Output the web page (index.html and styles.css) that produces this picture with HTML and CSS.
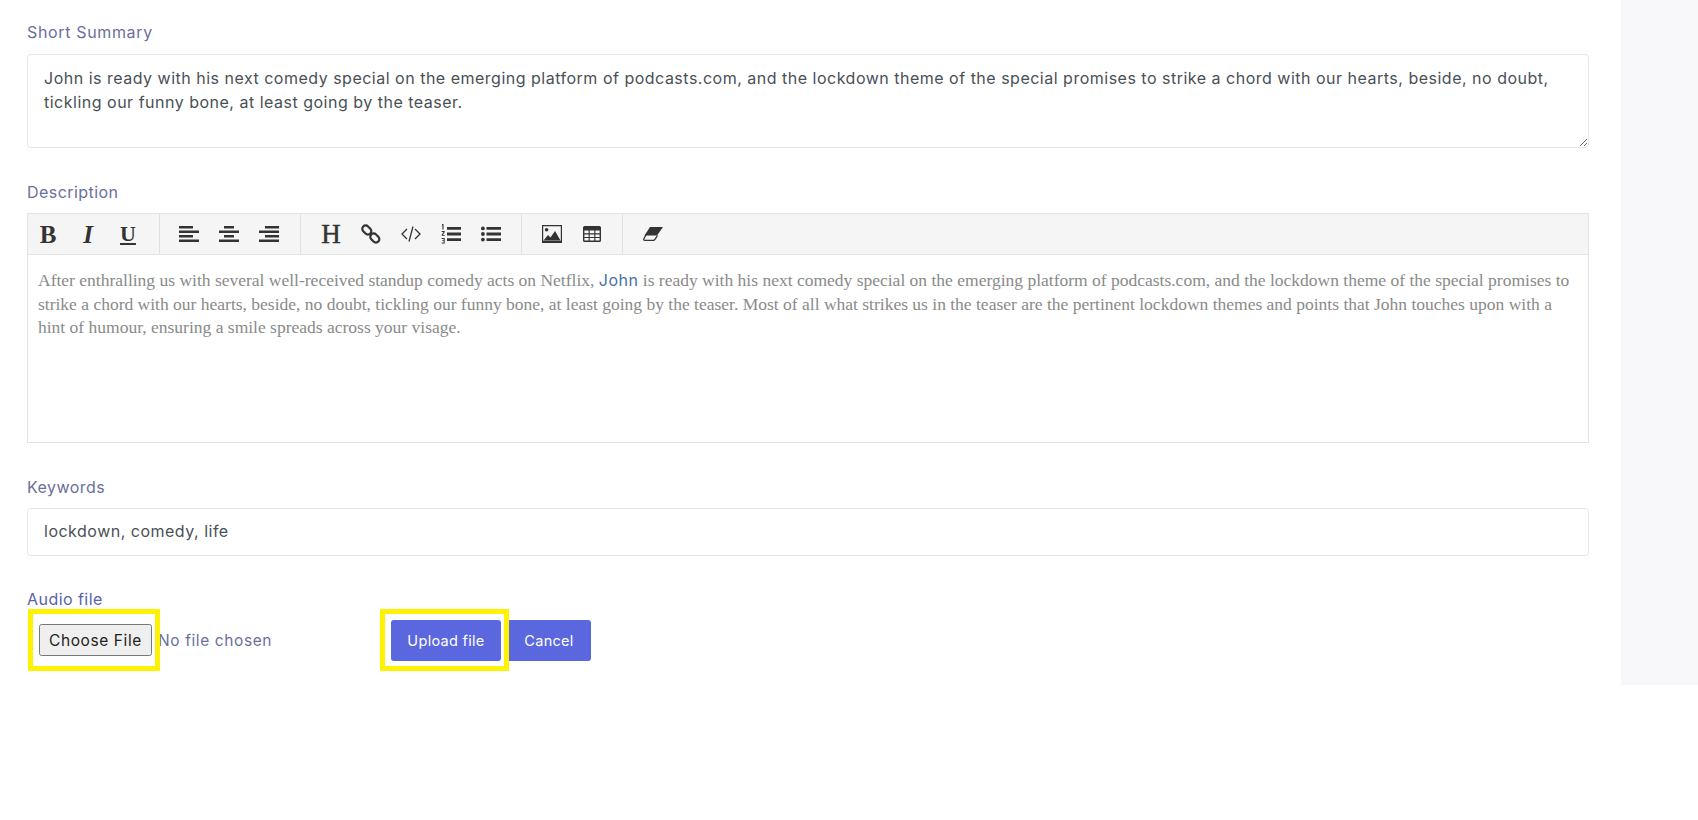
FILE: index.html
```html
<!DOCTYPE html>
<html lang="en">
<head>
<meta charset="utf-8">
<title>Upload episode</title>
<link rel="stylesheet" href="styles.css">
</head>
<body>
<div class="page">
  <main class="main">
    <div class="field">
      <label class="label label-summary" for="summary">Short Summary</label>
      <textarea class="control area" id="summary">John is ready with his next comedy special on the emerging platform of podcasts.com, and the lockdown theme of the special promises to strike a chord with our hearts, beside, no doubt, tickling our funny bone, at least going by the teaser.</textarea>
    </div>
    <div class="field">
      <div class="label label-desc">Description</div>
      <div class="editor">
        <div class="toolbar">
          <div class="group">
            <button class="tool serif bold">B</button>
            <button class="tool serif italic">I</button>
            <button class="tool serif under">U</button>
          </div>
          <div class="group">
            <button class="tool"><svg class="ico" viewBox="0 0 20 20"><path d="M0 2h14v2.600H0zM0 6.500h20v2.600H0zM0 11h14v2.600H0zM0 15.500h20v2.600H0z"/></svg></button>
            <button class="tool"><svg class="ico" viewBox="0 0 20 20"><path d="M5 2h10v2.600H5zM0 6.500h20v2.600H0zM5 11h10v2.600H5zM0 15.500h20v2.600H0z"/></svg></button>
            <button class="tool"><svg class="ico" viewBox="0 0 20 20"><path d="M6 2h14v2.600H6zM0 6.500h20v2.600H0zM6 11h14v2.600H6zM0 15.500h20v2.600H0z"/></svg></button>
          </div>
          <div class="group">
            <button class="tool serif heading">H</button>
            <button class="tool"><svg class="ico ico-line" viewBox="0 0 20 20" stroke-width="2.200"><rect x="0.800" y="2.600" width="10" height="6.800" rx="3.400" transform="rotate(45 5.800 6)"/><rect x="8.800" y="10.600" width="10" height="6.800" rx="3.400" transform="rotate(45 13.800 14)"/></svg></button>
            <button class="tool"><svg class="ico ico-line" viewBox="0 0 20 20" stroke-width="1.300"><path d="M6 5 1 10l5 5M14 5l5 5-5 5M12 2.500 8 17.500"/></svg></button>
            <button class="tool"><svg class="ico" viewBox="0 0 20 20"><path d="M6 3h14v2.800H6zM6 8.600h14v2.800H6zM6 14.200h14V17H6z"/><path d="M1.200 0h1.300v5.500H1.400V1.200L.8 1.500zM.7 7h3v.9L1.900 10.900h1.900v.9H.6v-.8L2.500 8H.7zM.7 14h3v5.500h-3v-.9h2v-1.500H1.300v-.8h1.400V15h-2z"/></svg></button>
            <button class="tool"><svg class="ico" viewBox="0 0 20 20"><circle cx="1.900" cy="4.400" r="1.900"/><circle cx="1.900" cy="10" r="1.900"/><circle cx="1.900" cy="15.600" r="1.900"/><path d="M5.500 3H20v2.800H5.500zM5.500 8.600H20v2.800H5.500zM5.500 14.200H20V17H5.500z"/></svg></button>
          </div>
          <div class="group">
            <button class="tool"><svg class="ico" viewBox="0 0 20 18"><path fill-rule="evenodd" d="M0 0h20v18H0zM1.200 1.200v14.600h17.600V1.200z"/><circle cx="4.600" cy="4.800" r="1.800"/><path d="M1.500 15.500 6 10l2.500 2.500L13 6l5.500 9.500z"/></svg></button>
            <button class="tool"><svg class="ico ico-table" viewBox="0 0 18 16"><path fill-rule="evenodd" d="M1.500 0h15A1.500 1.500 0 0 1 18 1.500v13a1.500 1.500 0 0 1-1.500 1.500h-15A1.500 1.500 0 0 1 0 14.500v-13A1.500 1.500 0 0 1 1.500 0zM1.400 4.400v2.900h4.200V4.400zm5.300 0v2.900h4.600V4.400zm5.700 0v2.900h4.200V4.400zM1.400 8.400v2.500h4.200V8.400zm5.300 0v2.500h4.600V8.400zm5.700 0v2.500h4.200V8.400zM1.400 12v2.600h4.200V12zm5.300 0v2.600h4.600V12zm5.700 0v2.600h4.200V12z"/></svg></button>
          </div>
          <div class="group group-last">
            <button class="tool"><svg class="ico" viewBox="0 0 20 16"><path d="M7 1h13l-6 8.500H1.500z"/><path class="eraser-edge" d="M3.500 8 .8 13c-.3.800.1 1.400 1 1.400h8.500c.7 0 1.200-.3 1.500-.8L14.500 9.500"/></svg></button>
          </div>
        </div>
        <div class="content">After enthralling us with several well-received standup comedy acts on Netflix, <span class="name">John</span> is ready with his next comedy special on the emerging platform of podcasts.com, and the lockdown theme of the special promises to strike a chord with our hearts, beside, no doubt, tickling our funny bone, at least going by the teaser. Most of all what strikes us in the teaser are the pertinent lockdown themes and points that John touches upon with a hint of humour, ensuring a smile spreads across your visage.</div>
      </div>
    </div>
    <div class="field field-key">
      <label class="label label-key" for="keywords">Keywords</label>
      <input class="control line" id="keywords" value="lockdown, comedy, life">
    </div>
    <div class="field field-audio">
      <label class="label label-audio" for="audio">Audio file</label>
      <div class="upload-row">
        <input class="file" id="audio" type="file">
        <button class="btn btn-upload">Upload file</button>
        <button class="btn btn-cancel">Cancel</button>
        <span class="mark mark-file"></span>
        <span class="mark mark-upload"></span>
      </div>
    </div>
  </main>
  <aside class="side"></aside>
</div>
</body>
</html>
```
FILE: styles.css
```css
* { box-sizing: border-box; }
html, body { margin: 0; padding: 0; background: #fff; }
body { font-family: Inter, "Open Sans", sans-serif; color: #495057; }
.page { display: flex; height: 685px; }
.main { flex: 1; padding: 22px 32px 0 27px; }
.side { width: 77px; background: #f8f8fb; }
.field { margin-bottom: 34px; }
.field-key { margin-bottom: 33px; }
.label { display: block; font-size: 16px; letter-spacing: .45px; line-height: 21px; color: #6a6f9c; margin-bottom: 11px; }
.label-summary { letter-spacing: .65px; }
.label-desc { margin-bottom: 10px; }
.label-key { margin-bottom: 10px; }
.control {
  display: block; width: 100%; border: 1px solid #e6e6ef; border-radius: 4px; background: #fff;
  font-family: Inter, "Open Sans", sans-serif; font-size: 16px; letter-spacing: .5px; color: #495057; outline: none;
}
.area { height: 94px; padding: 11px 16px; line-height: 24px; resize: vertical; }
.line { height: 48px; padding: 0 16px 3px; }
.editor { border: 1px solid #e3e3e3; height: 230px; }
.toolbar { display: flex; height: 41px; background: #f5f5f5; border-bottom: 1px solid #e3e3e3; }
.group { display: flex; padding: 0 10px; border-right: 1px solid #e0e0e0; }
.group:first-child { padding: 0 11px 0 0; }
.group:nth-child(2) { padding: 0 11px 0 9px; }
.group-last { border-right: 0; }
.tool {
  width: 40px; height: 40px; padding: 0; border: 0; background: transparent; color: #333;
  display: flex; align-items: center; justify-content: center;
}
.ico { width: 20px; height: 20px; fill: #333; display: block; }
.ico-line { fill: none; stroke: #333; }
.eraser-edge { fill: none; stroke: #333; stroke-width: 1.300px; }
.ico-table { width: 18px; }
.serif { font-family: "Liberation Serif", serif; line-height: 1; }
.bold { font-weight: 700; font-size: 25px; }
.italic { font-style: italic; font-weight: 700; font-size: 25px; }
.under { text-decoration: underline; font-weight: 700; font-size: 22px; }
.heading { font-weight: 400; font-size: 27px; -webkit-text-stroke: .4px #333; }
.content { padding: 14px 10px; font-family: "Liberation Serif", serif; font-size: 17.5px; line-height: 23.6px; color: #8a8a8a; }
.name { font-family: Inter, sans-serif; color: #4a6fa5; font-size: 16px; letter-spacing: .5px; }
.field-audio { margin: 0; }
.label-audio { margin-bottom: -1px; color: #5a62a8; }
.upload-row { position: relative; display: flex; align-items: center; height: 62px; padding-left: 12px; }
.file { width: 352px; font-family: Inter, sans-serif; font-size: 15.5px; letter-spacing: .6px; color: #6a6f9c; }
.file::file-selector-button { font: inherit; letter-spacing: .6px; color: #222; width: 113px; height: 32px; margin-right: 6px; }
.btn {
  height: 41px; padding: 0; border: 0; border-radius: 3px; background: #5a67de; color: #fff;
  font-family: Inter, sans-serif; font-size: 14.5px; letter-spacing: .3px;
}
.btn-upload { width: 110px; }
.btn-cancel { width: 84px; margin-left: 6px; }
.mark { position: absolute; top: 0; height: 62px; border: 5px solid #fff200; }
.mark-file { left: 1px; width: 132px; }
.mark-upload { left: 353px; width: 129px; }
```
